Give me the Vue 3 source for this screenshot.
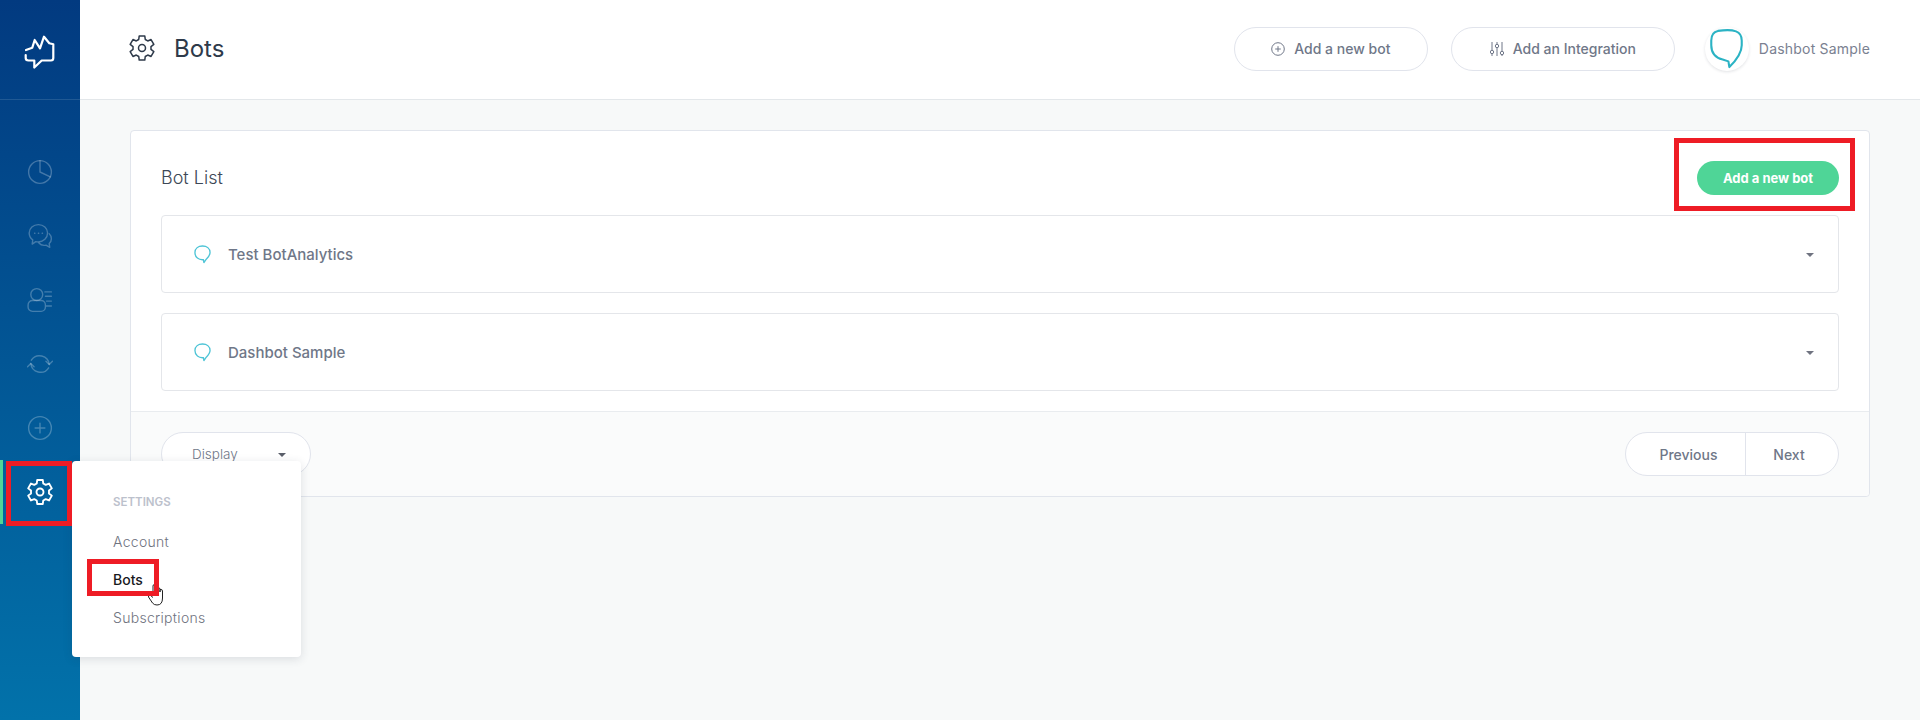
<template>
  <div class="page">
    <aside class="sidebar">
      <div class="logo">
        <svg class="logo-mark" width="32" height="36" viewBox="24 34 32 36" fill="none" stroke="#fff" stroke-width="2.2" stroke-linejoin="round" stroke-linecap="round">
          <path d="M26 50 L32.300 47.700 L34.700 40 L40 48.300 L44 36.700 L49.300 43.300 L53.300 44.300 V58 Q53.300 60.500 51 60.500 H41.700 L34.300 67.500 V60.500 H28.500 Q25.700 60.500 25.700 58 V55" />
        </svg>
      </div>
      <nav class="nav">
        <div v-for="item in navItems" :key="item.name" class="nav-item" :class="{ active: item.active }">
          <svg :width="item.active ? 28 : 26" :height="item.active ? 28 : 26" viewBox="0 0 24 24" fill="none" stroke="currentColor" :stroke-width="item.active ? 1.6 : 1.3" stroke-linecap="round" stroke-linejoin="round">
            <path v-for="d in item.paths" :key="d" :d="d" />
          </svg>
        </div>
      </nav>
    </aside>

    <main class="main">
      <header class="topbar">
        <div class="title">
          <svg class="title-icon" width="28" height="28" viewBox="0 0 24 24" fill="none" stroke="#2e3a4a" stroke-width="1.300" stroke-linejoin="round">
            <path :d="gearPath" />
            <circle cx="12" cy="12" r="3" />
          </svg>
          <h1>Bots</h1>
        </div>
        <div class="actions">
          <button class="ghost-btn add">
            <svg width="14" height="14" viewBox="0 0 14 14" fill="none" stroke="#6f7788" stroke-width="1">
              <circle cx="7" cy="7" r="6.300" />
              <path d="M7 4.200v5.600M4.200 7h5.600" />
            </svg>
            Add a new bot
          </button>
          <button class="ghost-btn integration">
            <svg width="14" height="16" viewBox="0 0 14 16" fill="none" stroke="#6f7788" stroke-width="1">
              <path d="M2 1v8M2 13v2M7 1v2M7 7v8M12 1v9M12 14v1" />
              <circle cx="2" cy="11" r="1.700" />
              <circle cx="7" cy="5" r="1.700" />
              <circle cx="12" cy="12" r="1.700" />
            </svg>
            Add an Integration
          </button>
          <div class="profile">
            <div class="avatar">
              <svg width="35" height="40" viewBox="0 0 36 42" fill="none" stroke="#2bb3c4" stroke-width="2.200" stroke-linejoin="round">
                <path d="M9 2 C16 1 24 1 28 2.500 C32 4 34 7 34 12 V17 C34 24 29 32 21 40 L20 34 L14 32 C6 30 2 25 2 17 V12 C2 6 4 3 9 2 Z" />
              </svg>
            </div>
            <span>Dashbot Sample</span>
          </div>
        </div>
      </header>

      <section class="content">
        <div class="card">
          <div class="card-head">
            <h2>Bot List</h2>
            <button class="primary-btn">Add a new bot</button>
          </div>
          <div class="bot-list">
            <div v-for="bot in bots" :key="bot" class="bot-row">
              <svg width="17" height="19" viewBox="0 0 18 20" fill="none" stroke="#4dc4d6" stroke-width="1.400" stroke-linejoin="round">
                <path d="M9 1 C13.500 1 17 3.500 17 8 C17 11 15 13 13 15 L10.500 18.500 L10 15.500 C5 16 1 13 1 8 C1 3.500 4.500 1 9 1 Z" />
              </svg>
              <span class="bot-name">{{ bot }}</span>
              <i class="caret"></i>
            </div>
          </div>
          <div class="card-foot">
            <button class="display-btn">
              <span>Display</span>
              <i class="caret dark"></i>
            </button>
            <div class="pager">
              <button>Previous</button>
              <button>Next</button>
            </div>
          </div>
        </div>
      </section>
    </main>

    <div class="menu">
      <div class="menu-label">SETTINGS</div>
      <a>Account</a>
      <a class="current">Bots</a>
      <a>Subscriptions</a>
    </div>

    <svg class="cursor" width="20" height="24" viewBox="0 0 20 24" fill="#fff" stroke="#222" stroke-width="1" stroke-linejoin="round">
      <path d="M6 12 V3 Q6 1.500 7.500 1.500 Q9 1.500 9 3 V9 V4 Q11 3.500 11 5 V9 V5 Q13 4.500 13 6 V9 V6.500 Q15.500 6 15.500 8 V15 Q15.500 22 10 22 Q7 22 5.500 20 L1.500 14 Q1 12 3 12 L6 14.500" />
    </svg>

    <div class="mark mark-gear"></div>
    <div class="mark mark-bots"></div>
    <div class="mark mark-add"></div>
  </div>
</template>

<script setup>
// six tooth cog, same outline for the title and the sidebar
function makeGear() {
  const pts = [];
  for (let k = 0; k < 6; k++) {
    const a = -90 + k * 60;
    [
      [7.8, -21],
      [10.6, -13],
      [10.6, 13],
      [7.8, 21],
    ].forEach(([r, d]) => {
      const t = ((a + d) * Math.PI) / 180;
      pts.push(`${(12 + r * Math.cos(t)).toFixed(2)} ${(12 + r * Math.sin(t)).toFixed(2)}`);
    });
  }
  return "M" + pts.join("L") + "Z";
}

const gearPath = makeGear();

const navItems = [
  {
    name: "reports",
    paths: ["M12 1.500a10.500 10.500 0 1 0 0 21 10.500 10.500 0 0 0 0-21z", "M12 1.500V12l9.500 4.500"],
  },
  {
    name: "chat",
    paths: [
      "M10.500 1.500c-4.700 0-8.500 3.500-8.500 7.800 0 2.600 1.300 4.900 3.300 6.300L4.800 19.500l3.300-2.300c.8.200 1.600.3 2.400.3 4.700 0 8.500-3.700 8.500-8.200S15.200 1.500 10.500 1.500z",
      "M20.500 10c1.300 1.200 2 2.800 2 4.500 0 1.800-.8 3.300-2 4.500l.5 3.500-3.500-2c-2.500.5-5-.2-6.500-2",
      "M7 9.500h.3M10.500 9.500h.3M14 9.500h.3",
    ],
  },
  {
    name: "users",
    paths: [
      "M9 1.500a5.500 5.500 0 1 1 0 11 5.500 5.500 0 0 1 0-11z",
      "M5 12.500H13a4 4 0 0 1 4 4v2a4 4 0 0 1-4 4H5a4 4 0 0 1-4-4v-2a4 4 0 0 1 4-4z",
      "M16.500 4.500h6M17 8.500h5.500M18 13h4.500M18 17.500h4.500",
    ],
  },
  {
    name: "sync",
    paths: [
      "M4 8.500A9 9 0 0 1 20.500 12.500",
      "M20 15.500A9 9 0 0 1 3.500 11.500",
      "M17.500 9.500l3 3 3-3M.5 14.500l3-3 3 3",
    ],
  },
  {
    name: "add",
    paths: ["M12 1.500a10.500 10.500 0 1 0 0 21 10.500 10.500 0 0 0 0-21z", "M12 7.500v9M7.500 12h9"],
  },
  {
    name: "settings",
    active: true,
    paths: [gearPath, "M12 9a3 3 0 1 0 0 6 3 3 0 0 0 0-6z"],
  },
];

const bots = ["Test BotAnalytics", "Dashbot Sample"];
</script>

<style>
html,
body {
  margin: 0;
  overflow: hidden;
}
</style>

<style scoped>
.page {
  position: relative;
  display: flex;
  width: 1920px;
  height: 720px;
  overflow: hidden;
  font-family: Inter, "Liberation Sans", sans-serif;
  color: #6f7788;
  background: #f7f9f9;
}

button {
  font-family: inherit;
  cursor: pointer;
}

.sidebar {
  flex: 0 0 80px;
  display: flex;
  flex-direction: column;
  background: linear-gradient(180deg, #023a80 0%, #0272aa 100%);
}

.logo {
  height: 99px;
  border-bottom: 1px solid rgba(255, 255, 255, 0.12);
  display: flex;
  align-items: center;
  justify-content: center;
}

.logo-mark {
  margin-top: 5px;
}

.nav {
  padding-top: 40px;
}

.nav-item {
  height: 64px;
  display: flex;
  align-items: center;
  justify-content: center;
  color: rgba(255, 255, 255, 0.26);
}

.nav-item.active {
  color: #fff;
  box-shadow: inset 3px 0 0 #4fd597;
}

.main {
  flex: 1;
  display: flex;
  flex-direction: column;
  min-width: 0;
}

.topbar {
  flex: none;
  height: 99px;
  padding: 0 50px;
  display: flex;
  align-items: center;
  justify-content: space-between;
  background: #fff;
  border-bottom: 1px solid #e3e7ea;
}

.title {
  display: flex;
  align-items: center;
  gap: 18px;
  margin-bottom: 3px;
}

.title-icon {
  margin-left: -2px;
}

.title h1 {
  margin: 0;
  font-size: 24px;
  font-weight: 400;
  color: #2e3a4a;
}

.actions {
  display: flex;
  align-items: center;
  margin-bottom: 2px;
}

.ghost-btn {
  height: 44px;
  display: flex;
  align-items: center;
  justify-content: center;
  gap: 9px;
  background: #fff;
  border: 1px solid #e1e4ec;
  border-radius: 22px;
  font-size: 14px;
  font-weight: 500;
  color: #6f7788;
}

.ghost-btn.add {
  width: 194px;
  margin-right: 23px;
}

.ghost-btn.integration {
  width: 224px;
  margin-right: 30px;
}

.profile {
  display: flex;
  align-items: center;
  gap: 10px;
  font-size: 14px;
  letter-spacing: 0.2px;
  color: #7a8191;
}

.avatar {
  width: 44px;
  height: 44px;
  border-radius: 50%;
  background: #fff;
  box-shadow: 0 1px 3px rgba(40, 50, 70, 0.14);
  display: flex;
  align-items: center;
  justify-content: center;
}

.content {
  flex: 1;
  padding: 30px 50px;
}

.card {
  background: #fff;
  border: 1px solid #e1e5ec;
  border-radius: 4px;
}

.card-head {
  height: 84px;
  padding: 0 30px;
  display: flex;
  align-items: center;
  justify-content: space-between;
}

.card-head h2 {
  margin: 8px 0 0;
  font-size: 18px;
  font-weight: 300;
  color: #3d4856;
}

.primary-btn {
  width: 142px;
  height: 34px;
  margin-top: 10px;
  border: none;
  border-radius: 17px;
  background: #4fd597;
  color: #fff;
  font-size: 13px;
  font-weight: 700;
}

.bot-list {
  padding: 0 30px 20px;
  display: flex;
  flex-direction: column;
  gap: 20px;
}

.bot-row {
  height: 76px;
  padding: 0 24px 0 32px;
  display: flex;
  align-items: center;
  background: #fff;
  border: 1px solid #e4e6ea;
  border-radius: 4px;
}

.bot-name {
  flex: 1;
  margin-left: 17px;
  font-size: 15px;
  font-weight: 500;
  color: #6f7788;
}

.caret {
  width: 0;
  height: 0;
  margin-top: 1px;
  border-left: 4px solid transparent;
  border-right: 4px solid transparent;
  border-top: 4px solid #6f7380;
}

.caret.dark {
  border-top-color: #5a5f6a;
}

.card-foot {
  padding: 20px 30px;
  display: flex;
  align-items: center;
  justify-content: space-between;
  background: #fafbfb;
  border-top: 1px solid #e9ecef;
  border-radius: 0 0 4px 4px;
}

.display-btn {
  width: 150px;
  height: 44px;
  padding: 0 24px 0 30px;
  display: flex;
  align-items: center;
  justify-content: space-between;
  background: #fff;
  border: 1px solid #e1e4ec;
  border-radius: 22px;
  font-size: 13.500px;
  font-weight: 300;
  color: #6f7788;
}

.pager {
  display: flex;
  width: 214px;
  height: 44px;
  box-sizing: border-box;
  background: #fff;
  border: 1px solid #e1e4ec;
  border-radius: 22px;
  overflow: hidden;
}

.pager button {
  border: none;
  background: none;
  font-size: 14px;
  font-weight: 500;
  color: #6f7788;
}

.pager button:first-child {
  width: 120px;
  padding-left: 12px;
  border-right: 1px solid #e1e4ec;
}

.pager button:last-child {
  flex: 1;
  padding-right: 12px;
}

.menu {
  position: absolute;
  left: 72px;
  top: 461px;
  width: 229px;
  height: 196px;
  box-sizing: border-box;
  padding: 34px 41px;
  display: flex;
  flex-direction: column;
  background: #fff;
  border-radius: 4px;
  box-shadow: 0 2px 10px rgba(40, 50, 70, 0.14);
  font-size: 14px;
}

.menu-label {
  flex: none;
  height: 15px;
  line-height: 15px;
  margin-bottom: 23px;
  font-size: 11.500px;
  font-weight: 600;
  color: #bcc1cc;
}

.menu a {
  flex: none;
  height: 38px;
  line-height: 17px;
  font-weight: 300;
  letter-spacing: 0.3px;
  color: #6f7380;
}

.menu a.current {
  font-weight: 500;
  letter-spacing: 0;
  color: #17191d;
}

.mark {
  position: absolute;
  box-sizing: border-box;
  border: 5px solid #ee1c25;
}

.mark-gear {
  left: 6px;
  top: 461px;
  width: 66px;
  height: 65px;
}

.mark-bots {
  left: 87px;
  top: 559px;
  width: 72px;
  height: 37px;
}

.mark-add {
  left: 1674px;
  top: 138px;
  width: 181px;
  height: 73px;
}

.cursor {
  position: absolute;
  left: 147px;
  top: 583px;
}
</style>
